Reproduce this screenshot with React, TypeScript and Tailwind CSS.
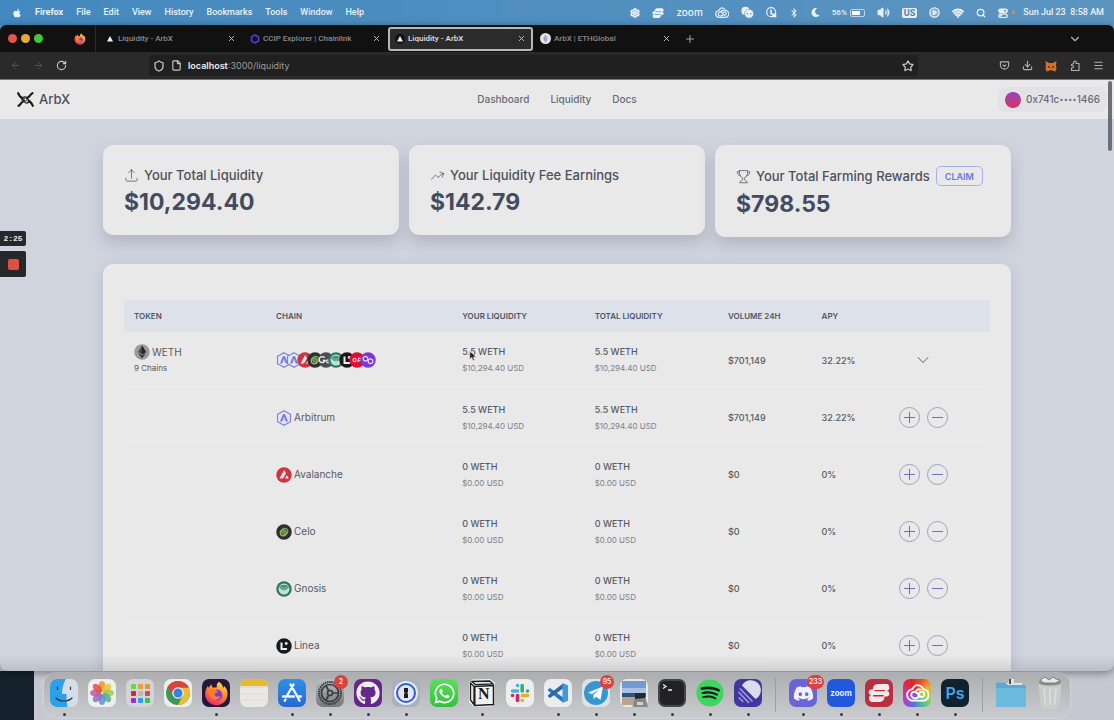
import React from "react";
import {
  FaApple,
  FaBluetoothB,
  FaDiscord,
  FaGithub,
  FaMoon,
  FaSpotify,
  FaWhatsapp,
} from "react-icons/fa";
import {
  ArrowLeft,
  ArrowRight,
  ChevronDown,
  CirclePlay,
  Download,
  File,
  Menu,
  Plus,
  RotateCw,
  Search,
  Settings,
  Shield,
  Star,
  Volume2,
  Wifi,
  X,
} from "lucide-react";

type ChainName =
  | "Arbitrum"
  | "Avalanche"
  | "Celo"
  | "Goerli"
  | "Gnosis"
  | "Linea"
  | "Optimism"
  | "Polygon";

interface ChainRow {
  name: ChainName;
  amount: string;
  usd: string;
  volume: string;
  apy: string;
}

const chainRows: ChainRow[] = [
  { name: "Arbitrum", amount: "5.5 WETH", usd: "$10,294.40 USD", volume: "$701,149", apy: "32.22%" },
  { name: "Avalanche", amount: "0 WETH", usd: "$0.00 USD", volume: "$0", apy: "0%" },
  { name: "Celo", amount: "0 WETH", usd: "$0.00 USD", volume: "$0", apy: "0%" },
  { name: "Gnosis", amount: "0 WETH", usd: "$0.00 USD", volume: "$0", apy: "0%" },
  { name: "Linea", amount: "0 WETH", usd: "$0.00 USD", volume: "$0", apy: "0%" },
];

const stack: ChainName[] = [
  "Arbitrum",
  "Arbitrum",
  "Avalanche",
  "Celo",
  "Goerli",
  "Gnosis",
  "Linea",
  "Optimism",
  "Polygon",
];

const ChainIcon = ({ name }: { name: ChainName }) => {
  return (
    <svg viewBox="0 0 32 32" className="size-4 shrink-0">
      {name === "Arbitrum" && (
        <>
          <path d="M16 1.5 29 8.7v14.6L16 30.5 3 23.3V8.7z" fill="#e4e4f2" stroke="#7f7fd6" strokeWidth="2.2" />
          <path d="M8 23 14 8.5h4L24 23h-4.200L16 13l-3.800 10z" fill="#7676d2" />
          <path d="m15 20 2.500-5 2 5.500z" fill="#a7a7ea" />
        </>
      )}
      {name === "Avalanche" && (
        <>
          <circle cx="16" cy="16" r="15.500" fill="#cf3442" />
          <path d="M7 23 15.500 7.500c.6-1 1.400-1 2 0l2 3.800c.4.800.4 1.400 0 2.200L14.500 22c-.5.800-1 1-1.800 1zM18 23l3-5.300c.5-.8 1.200-.8 1.700 0l3 5.300z" fill="#f3e5e7" />
        </>
      )}
      {name === "Celo" && (
        <>
          <circle cx="16" cy="16" r="15.500" fill="#2c3130" />
          <circle cx="17.500" cy="14.500" r="6" fill="none" stroke="#6aa574" strokeWidth="2.500" />
          <circle cx="14.500" cy="17.500" r="6" fill="none" stroke="#a5b35c" strokeWidth="2.500" />
          <circle cx="16" cy="16" r="3.500" fill="#6e8b4a" />
        </>
      )}
      {name === "Goerli" && (
        <>
          <circle cx="16" cy="16" r="15.500" fill="#4c4e50" />
          <path d="M13 11.500A6 6 0 1 0 14 17H9.500" fill="none" stroke="#eee" strokeWidth="2.800" />
          <circle cx="20" cy="18.500" r="3" fill="none" stroke="#eee" strokeWidth="2.500" />
        </>
      )}
      {name === "Gnosis" && (
        <>
          <circle cx="16" cy="16" r="15.500" fill="#2b7a60" />
          <circle cx="16" cy="16" r="11" fill="#c9ded5" />
          <path d="M6 12c3-6 17-6 20 0l-5 5c-2 2-8 2-10 0z" fill="#46917a" />
          <path d="m9 11 7 6 7-6" fill="none" stroke="#b9d6cb" strokeWidth="1.500" />
        </>
      )}
      {name === "Linea" && (
        <>
          <circle cx="16" cy="16" r="15.500" fill="#18191b" />
          <path d="M9 9h4v11h9v4H9z" fill="#eee" />
          <circle cx="20.500" cy="11" r="2.800" fill="#eee" />
        </>
      )}
      {name === "Optimism" && (
        <>
          <circle cx="16" cy="16" r="15.500" fill="#e30c2c" />
          <ellipse cx="11" cy="16" rx="3" ry="3.500" fill="none" stroke="#f8dce0" strokeWidth="2.200" />
          <path d="m17.500 20.500 1.500-8h3.500c3.500 0 2.500 5-.5 5h-3.300" fill="none" stroke="#f8dce0" strokeWidth="2.200" />
        </>
      )}
      {name === "Polygon" && (
        <>
          <circle cx="16" cy="16" r="15.500" fill="#7c35d8" />
          <path
            d="m11 8.500 4.500 2.600v5L11 18.700l-4.500-2.600v-5zM21 13.300l4.500 2.600v5L21 23.500l-4.500-2.600v-5zM15.500 15.500l2 1.500"
            fill="none"
            stroke="#efe4fb"
            strokeWidth="2.300"
            strokeLinejoin="round"
          />
        </>
      )}
    </svg>
  );
};

const EthIcon = () => (
  <svg viewBox="0 0 32 32" className="size-4 shrink-0">
    <circle cx="16" cy="16" r="15.500" fill="#9b9b9c" />
    <path d="m16 3 8 13.200-8 4.700-8-4.700z" fill="#4a4a4c" />
    <path d="m16 3 8 13.200-8 4.700z" fill="#222326" />
    <path d="m8 18 8 4.700 8-4.700L16 29z" fill="#36373a" />
  </svg>
);

const FirefoxLogo = ({ className }: { className?: string }) => (
  <svg viewBox="0 0 32 32" className={className}>
    <defs>
      <linearGradient id="fox" x1="0.800" y1="0" x2="0.300" y2="1">
        <stop offset="0" stopColor="#ffe14a" />
        <stop offset="0.450" stopColor="#ff8a2a" />
        <stop offset="1" stopColor="#f0246e" />
      </linearGradient>
    </defs>
    <path
      d="M19 1c4 2.500 5 5 5.500 8 1-.8 1.200-1.800 1-3 3.500 3.500 5 7 4.500 12-.8 8-7 13-14 13S2 25.500 1.500 18C1.200 13 3 9 5 6l1 3c1-2 2-3.500 4-5-.2 2 .3 3.500 1.500 4.500 2.500-.2 3.500 0 5-.5C15.500 5.500 17 2.500 19 1z"
      fill="url(#fox)"
    />
    <circle cx="16.500" cy="18" r="7" fill="#7a3fd0" />
    <path d="M6 11c3-2 7-1.500 9 1 2 .3 3 .5 3 1.500-1 1.500-3.500 1.500-4.500 3.500.5 3 4 4.500 8 2-1 5-8 7-12.500 3.500C6.500 20 5 16 6 11z" fill="#ff7a2d" />
  </svg>
);

const CreativeCloud = ({ className }: { className?: string }) => (
  <svg viewBox="0 0 32 32" className={className} fill="none" stroke="currentColor" strokeWidth="2.600" strokeLinecap="round">
    <path d="M10 26a8 8 0 0 1-1-16C11 5 15 3.500 19 5c2.500.8 4 2.500 5 5a8 8 0 0 1-1 16z" />
    <path d="M18 20.500c-3 2.500-7 3-9.500.5a4.500 4.500 0 0 1 1-7c3-1.500 5 0 7 2.500l2.500 3c1.500 1.500 3.500 2 5.500.5a4 4 0 0 0-1.500-6.500c-2-.5-3 .2-4 1.500M14 12c2-2 4-2.500 6-1.500" />
  </svg>
);

const Loop = ({ className, slit }: { className?: string; slit: string }) => (
  <svg viewBox="0 0 32 32" className={className}>
    <path
      d="M14 3h12a5 5 0 0 1 0 10h1a4 4 0 0 1 0 8h-3a8 8 0 0 1-7 8H7a5 5 0 0 1-1-10H5a4 4 0 0 1 0-8h2a8 8 0 0 1 7-8z"
      fill="currentColor"
    />
    <path d="M10 12.500h14M8 20h14" stroke={slit} strokeWidth="2" strokeLinecap="round" />
  </svg>
);

const ArbxLogo = () => (
  <svg viewBox="0 0 48 42" className="h-[15px] w-[17px]" fill="none" stroke="#1b1b1d">
    <path d="M2 1l5 9c3 5 6 8 11 8M46 2c-5 2-8 5-10 9-2 3-5 5-9 5M46 41l-5-9c-3-5-6-8-11-8M2 40c5-2 8-5 10-9 2-3 5-5 9-5" strokeWidth="6" />
    <path d="M12 12c4 2 5 14 12 18 4 2 8 0 10-3M14 24c-1-7 5-12 11-10 6 2 7 10 13 17" strokeWidth="3.500" />
    <circle cx="24" cy="21" r="4" strokeWidth="2.500" />
  </svg>
);

const MenuBar = () => {
  const items = ["File", "Edit", "View", "History", "Bookmarks", "Tools", "Window", "Help"];
  return (
    <div className="flex h-[25px] shrink-0 items-center justify-between bg-linear-to-r from-[#4389bf] to-[#5c94c0] pr-[10px] pl-3 font-[Roboto,sans-serif] text-[9px] font-medium text-[#eaf2f8]">
      <div className="flex items-center gap-[13px]">
        <FaApple className="size-[10px]" />
        <span className="font-bold">Firefox</span>
        {items.map((item) => (
          <span key={item}>{item}</span>
        ))}
      </div>
      <div className="flex items-center gap-3">
        <Settings className="size-[10px]" strokeWidth={4} />
        <Loop className="size-[12px]" slit="#5791c0" />
        <span className="font-[Inter,sans-serif] text-[10px]">zoom</span>
        <CreativeCloud className="size-[14px]" />
        <svg viewBox="0 0 32 32" className="size-[13px]" fill="currentColor">
          <circle cx="11" cy="12" r="10" />
          <circle cx="20" cy="19" r="11" stroke="#5791c0" strokeWidth="1.500" />
          <circle cx="16" cy="19" r="2" fill="#5791c0" />
          <circle cx="24" cy="19" r="2" fill="#5791c0" />
        </svg>
        <svg viewBox="0 0 32 32" className="size-[11px]" fill="none" stroke="currentColor" strokeWidth="3.500">
          <circle cx="15" cy="15" r="13" />
          <path d="M15 8v14" strokeWidth="5" />
          <path d="M18 19h12v11H18z" fill="currentColor" stroke="none" />
        </svg>
        <FaBluetoothB className="size-[10px]" />
        <FaMoon className="size-[9px]" />
        <span className="flex items-center gap-[3px] text-[8px]">
          56%
          <span className="flex h-[8px] w-[15px] rounded-[2px] border border-white/60 p-px">
            <span className="w-2 bg-white" />
          </span>
        </span>
        <Volume2 className="size-[13px] fill-current" />
        <span className="rounded-[2px] bg-[#e8f0f6] px-[2px] text-[9px] leading-[10px] font-bold text-[#4f83a9]">US</span>
        <CirclePlay className="size-[11px] fill-white/20" strokeWidth={3} />
        <Wifi className="size-[12px]" strokeWidth={4} />
        <Search className="size-[10px]" strokeWidth={3} />
        <span className="flex items-center gap-1">
          <svg viewBox="0 0 20 20" className="size-[10px]" fill="none" stroke="currentColor" strokeWidth="2.500">
            <rect x="1.500" y="2" width="17" height="7" rx="3.500" fill="currentColor" />
            <rect x="1.500" y="12" width="17" height="7" rx="3.500" />
            <circle cx="14" cy="5.500" r="2" fill="#5791c0" stroke="none" />
            <circle cx="6" cy="15.500" r="2" fill="currentColor" stroke="none" />
          </svg>
          <span className="size-[3px] rounded-full bg-[#d99545]" />
        </span>
        <span className="-ml-1">Sun Jul 23&nbsp; 8:58 AM</span>
      </div>
    </div>
  );
};

const Triangle = () => (
  <svg viewBox="0 0 10 10" className="size-[10px]">
    <circle cx="5" cy="5" r="5" fill="#111" />
    <path d="M5 2 8 7.500H2z" fill="#f2f2f2" />
  </svg>
);

const Tab = ({ icon, title, active }: { icon: React.ReactNode; title: string; active?: boolean }) => (
  <div
    className={
      active
        ? "flex h-[24px] w-[145px] items-center rounded-[3px] border-2 border-[#b9b9b9] bg-[#2b2b2b] px-[5px] font-semibold text-[#d8d8d8]"
        : "flex h-[24px] w-[145px] items-center px-[7px] font-medium text-[#8a8a8a]"
    }
  >
    {icon}
    <span className="ml-[3px] flex-1 whitespace-nowrap">{title}</span>
    <button aria-label={"Close " + title}>
      <X className="size-[9px] text-[#c4c4c4]" strokeWidth={2.5} />
    </button>
  </div>
);

const TabBar = () => (
  <div className="flex h-[27px] shrink-0 items-center rounded-t-md bg-[#111111] font-[Roboto,sans-serif] text-[8px]">
    <div className="flex h-full w-[96px] shrink-0 items-center gap-[4px] border-r border-[#2c2c2c] pl-[8px]">
      <span className="size-[9px] rounded-full bg-[#e2554f]" />
      <span className="size-[9px] rounded-full bg-[#e3ab35]" />
      <span className="size-[9px] rounded-full bg-[#45c53c]" />
      <FirefoxLogo className="mr-[9px] ml-auto size-[12px]" />
    </div>
    <div className="flex pl-[2px]">
      <Tab icon={<Triangle />} title="Liquidity - ArbX" />
      <Tab
        icon={
          <svg viewBox="0 0 10 10" className="size-[10px]">
            <path d="M5 1 8.500 3v4L5 9 1.500 7V3z" fill="none" stroke="#4b3bd0" strokeWidth="1.700" />
          </svg>
        }
        title="CCIP Explorer | Chainlink"
      />
      <Tab icon={<Triangle />} title="Liquidity - ArbX" active />
      <Tab
        icon={
          <svg viewBox="0 0 12 12" className="size-[11px]">
            <circle cx="6" cy="6" r="6" fill="#e6e3ea" />
            <path d="m6 1.500 2.500 4.500L6 10.500 3.500 6z" fill="#8f9fd8" />
            <path d="m6 1.500 2.500 4.500L6 7.500z" fill="#e8b07e" />
          </svg>
        }
        title="ArbX | ETHGlobal"
      />
    </div>
    <button aria-label="New tab" className="ml-[6px]">
      <Plus className="size-[12px] text-[#a5a5a5]" />
    </button>
    <button aria-label="List all tabs" className="mr-[32px] ml-auto">
      <ChevronDown className="size-[14px] text-[#b5b5b5]" />
    </button>
  </div>
);

const Toolbar = () => (
  <div className="flex h-[28px] shrink-0 items-center border-b border-[#777] bg-[#2a2a2a] text-[#c6c6c6]">
    <div className="flex w-[149px] shrink-0 items-center gap-3 pl-[10px]">
      <ArrowLeft className="size-[11px] text-[#565656]" />
      <ArrowRight className="size-[11px] text-[#565656]" />
      <RotateCw className="size-[11px]" strokeWidth={2.5} />
    </div>
    <div className="flex h-[21px] flex-1 items-center rounded-[3px] bg-[#202020] px-[4px]">
      <Shield className="size-[12px]" strokeWidth={2.5} />
      <File className="ml-[6px] size-[11px]" strokeWidth={2.5} />
      <p className="ml-[6px] flex-1 text-[9px] text-[#9a9a9a]">
        <span className="font-semibold text-[#ededed]">localhost</span>:3000/liquidity
      </p>
      <Star className="size-[12px]" strokeWidth={2.5} />
    </div>
    <div className="flex w-[196px] shrink-0 items-center justify-end gap-[12px] pr-[10px] text-[#b0b0b0]">
      <svg viewBox="0 0 24 24" className="size-[11px]" fill="none" stroke="currentColor" strokeWidth="2.500">
        <path d="M3 4h18v7a9 9 0 0 1-18 0z" strokeLinejoin="round" />
        <path d="m8 10 4 4 4-4" />
      </svg>
      <Download className="size-[11px]" strokeWidth={2.5} />
      <svg viewBox="0 0 24 24" className="size-[12px]">
        <path d="m1 2 7 4h8l7-4-1 9 1 6-2 6-6-1.500H9L3 23l-2-6 1-6z" fill="#d4702b" />
        <path d="m6 12 4 1v3l-4-1zM18 12l-4 1v3l4-1zM9 20h6v2H9z" fill="#5b2f16" />
      </svg>
      <svg viewBox="0 0 24 24" className="size-[12px]" fill="none" stroke="currentColor" strokeWidth="2.200" strokeLinejoin="round">
        <path d="M9.500 6V4.500a2.500 2.500 0 0 1 5 0V7H20v14H5v-5h1.500a2.500 2.500 0 0 0 0-5H5V9l4.500-2z" />
      </svg>
      <Menu className="size-[11px]" strokeWidth={2.5} />
    </div>
  </div>
);

const SiteHeader = () => (
  <header className="grid h-[39px] shrink-0 grid-cols-[1fr_auto_1fr] items-center bg-[#e9e9ea] text-[10px] font-medium text-[#686c75]">
    <a href="#" className="flex items-center gap-[5px] pl-[17px] text-[13px] text-[#4b505b]">
      <ArbxLogo />
      ArbX
    </a>
    <nav className="flex gap-[21px]">
      <a href="#">Dashboard</a>
      <a href="#">Liquidity</a>
      <a href="#">Docs</a>
    </nav>
    <button className="mr-[7px] flex h-[25px] items-center gap-[5px] justify-self-end rounded-lg bg-[#e3e3e6] px-[7px]">
      <span className="size-4 rounded-full bg-linear-to-b from-[#9440b8] to-[#d92b62]" />
      <span className="flex items-center">
        0x741c
        <span className="text-[13px] leading-none font-bold">····</span>
        1466
      </span>
    </button>
  </header>
);

const StatCard = ({
  icon,
  title,
  value,
  action,
}: {
  icon: string;
  title: string;
  value: string;
  action?: string;
}) => (
  <section className="rounded-[10px] bg-[#e9e9ea] px-[21px] pt-5 pb-[18px] shadow-[0_8px_16px_rgba(70,75,95,0.22)]">
    <div className="flex items-center text-[13px] leading-5 font-medium whitespace-nowrap text-[#4d515b]">
      <svg
        viewBox="0 0 24 24"
        className="mr-[5px] size-[15px]"
        fill="none"
        stroke="currentColor"
        strokeWidth="1.200"
        strokeLinecap="round"
        strokeLinejoin="round"
      >
        <path d={icon} />
      </svg>
      {title}
      {action && (
        <button className="my-px ml-[6px] h-5 rounded-[5px] border border-[#a5b0ee] px-[8px] text-[9px] leading-none font-semibold text-[#5f78ee]">
          {action}
        </button>
      )}
    </div>
    <p className="mt-[2px] text-[23px] leading-[30px] font-bold text-[#434b5f]">{value}</p>
  </section>
);

const uploadPath =
  "M3 16.500v2.250A2.250 2.250 0 005.250 21h13.500A2.250 2.250 0 0021 18.750V16.500m-13.500-9L12 3m0 0l4.500 4.500M12 3v13.500";
const trendPath =
  "M2.250 18L9 11.250l4.306 4.307a11.950 11.950 0 015.814-5.519l2.740-1.220m0 0l-5.940-2.280m5.940 2.280l-2.280 5.941";
const trophyPath =
  "M5.500 2.500h13v3c0 4-1.500 7-5 8.500v3c0 1.500 3.500 2 4.500 3.500v1.500H6v-1.500c1-1.500 4.500-2 4.500-3.500v-3c-3.500-1.500-5-4.500-5-8.500zM5.500 4.500H2c0 3.500 2 6 5 6.500M18.500 4.500H22c0 3.500-2 6-5 6.500";

const Amount = ({ amount, usd }: { amount: string; usd: string }) => (
  <>
    <p className="leading-4 font-medium">{amount}</p>
    <p className="text-[8px] leading-4 text-[#7d8087]">{usd}</p>
  </>
);

const RoundButton = ({ label, path }: { label: string; path: string }) => (
  <button
    aria-label={label}
    className="flex size-[21px] items-center justify-center rounded-full border border-[#a19ec2] text-[#736fb4]"
  >
    <svg viewBox="0 0 13 13" className="size-[13px]" stroke="currentColor" strokeWidth="1">
      <path d={path} />
    </svg>
  </button>
);

const LiquidityTable = () => (
  <table className="w-full table-fixed text-left text-[9px] text-[#565a63]">
    <colgroup>
      <col className="w-[16.4%]" />
      <col className="w-[21.5%]" />
      <col className="w-[15.3%]" />
      <col className="w-[15.4%]" />
      <col className="w-[10.8%]" />
      <col className="w-[8.9%]" />
      <col />
    </colgroup>
    <thead>
      <tr className="h-8 bg-[#dde1ea] text-[8px] text-[#4f5563]">
        <th className="rounded-l px-[10px] font-semibold">TOKEN</th>
        <th className="px-[10px] font-semibold">CHAIN</th>
        <th className="px-[10px] font-semibold">YOUR LIQUIDITY</th>
        <th className="px-[10px] font-semibold">TOTAL LIQUIDITY</th>
        <th className="px-[10px] font-semibold">VOLUME 24H</th>
        <th className="px-[10px] font-semibold">APY</th>
        <th />
      </tr>
    </thead>
    <tbody>
      <tr className="h-[57px] border-b border-[#e7e7e8]">
        <td className="px-[10px]">
          <p className="flex h-4 items-center gap-[2px] text-[10px]">
            <EthIcon />
            WETH
          </p>
          <p className="text-[8px] leading-4">9 Chains</p>
        </td>
        <td className="px-[10px]">
          <div className="flex w-[94px]">
            {stack.map((name, i) => (
              <span key={i} className="flex w-0 flex-1">
                <ChainIcon name={name} />
              </span>
            ))}
          </div>
        </td>
        <td className="px-[10px]">
          <Amount amount="5.5 WETH" usd="$10,294.40 USD" />
        </td>
        <td className="px-[10px]">
          <Amount amount="5.5 WETH" usd="$10,294.40 USD" />
        </td>
        <td className="px-[10px] font-medium">$701,149</td>
        <td className="px-[10px] font-medium">32.22%</td>
        <td className="px-[10px]">
          <button aria-label="Collapse chains" className="flex w-[49px] justify-center">
            <ChevronDown className="size-[20px] text-[#777a82]" strokeWidth={1.25} />
          </button>
        </td>
      </tr>
      {chainRows.map((row) => (
        <tr key={row.name} className="h-[57px] border-b border-[#e7e7e8]">
          <td />
          <td className="px-[10px]">
            <p className="flex items-center gap-[2px] text-[10px]">
              <ChainIcon name={row.name} />
              {row.name}
            </p>
          </td>
          <td className="px-[10px]">
            <Amount amount={row.amount} usd={row.usd} />
          </td>
          <td className="px-[10px]">
            <Amount amount={row.amount} usd={row.usd} />
          </td>
          <td className="px-[10px] font-medium">{row.volume}</td>
          <td className="px-[10px] font-medium">{row.apy}</td>
          <td className="px-[10px]">
            <div className="flex gap-[7px]">
              <RoundButton label={"Add " + row.name + " liquidity"} path="M6.500 1v11M1 6.500h11" />
              <RoundButton label={"Remove " + row.name + " liquidity"} path="M1 6.500h11" />
            </div>
          </td>
        </tr>
      ))}
    </tbody>
  </table>
);

const DockItem = ({
  className,
  children,
  open,
  badge,
}: {
  className?: string;
  children?: React.ReactNode;
  open?: boolean;
  badge?: string;
}) => (
  <div className="relative flex h-full w-7 shrink-0 flex-col items-center pt-[6px]">
    <div className={"flex size-7 items-center justify-center rounded-[7px] " + (className || "")}>{children}</div>
    {open && <span className="mt-[6px] size-[3px] rounded-full bg-[#3a3a3c]" />}
    {badge && (
      <span className="absolute top-[2px] left-[18px] min-w-[14px] rounded-full bg-[#da4242] px-[2px] text-center text-[7px] leading-[14px] font-medium text-white">
        {badge}
      </span>
    )}
  </div>
);

const DockDivider = () => <span className="mx-[3px] mt-[5px] h-[34px] w-px shrink-0 bg-[#9c9da0]" />;

const Dock = () => {
  const petals = ["#f0902c", "#e9c62f", "#a2c84a", "#53b08a", "#5a95d6", "#8c6fc5", "#c35a9b", "#e2513f"];
  const tiles = ["#5be03a", "#e8a13a", "#e8932b", "#d52b2b", "#b9b9bd", "#e83a66", "#a02ad0", "#2f9ae8", "#38c04a"];
  return (
    <div className="relative z-10 mx-auto flex h-[45px] w-fit gap-[10px] rounded-[12px] bg-linear-to-b from-[#adaeb0] to-[#cbcccf] px-[6px] shadow-[0_0_0_1px_rgba(255,255,255,0.2)]">
      {/* Finder */}
      <DockItem open className="overflow-hidden">
        <svg viewBox="0 0 28 28">
          <path d="M0 0h28v28H0z" fill="#d5dde6" />
          <path d="M0 0h16c-2.500 4-4 9-4 15h4.500c0 5 .2 9 .8 13H0z" fill="#2ea0ea" />
          <path d="M7.500 8v2.500M20.500 8v2.500M6 19c4 4 12 4 16 0" fill="none" stroke="#263746" strokeWidth="1.200" strokeLinecap="round" />
        </svg>
      </DockItem>
      {/* Photos */}
      <DockItem className="bg-[#eeeeee]">
        <svg viewBox="0 0 28 28">
          {petals.map((color, i) => (
            <ellipse key={color} cx="14" cy="7.500" rx="3.500" ry="5.500" fill={color} fillOpacity="0.850" transform={`rotate(${i * 45} 14 14)`} />
          ))}
        </svg>
      </DockItem>
      {/* Launchpad */}
      <DockItem className="bg-[#d3d4d8]">
        <div className="grid grid-cols-3 gap-[2px]">
          {tiles.map((color) => (
            <span key={color} className="size-[5px] rounded-[1px]" style={{ backgroundColor: color }} />
          ))}
        </div>
      </DockItem>
      {/* Chrome */}
      <DockItem className="bg-[#eeeeee]">
        <svg viewBox="0 0 28 28">
          <circle cx="14" cy="14" r="12" fill="#3a9a54" />
          <path d="M14 8.500h10.700A12 12 0 0 1 14 26l4.800-9.300z" fill="#eebc34" />
          <path d="M3.600 8A12 12 0 0 1 24.700 8.500H14l-5 8z" fill="#d9443a" />
          <circle cx="14" cy="14" r="5.800" fill="#f1f1f1" />
          <circle cx="14" cy="14" r="4.500" fill="#3b7de0" />
        </svg>
      </DockItem>
      <DockItem open className="bg-[#23183c]">
        <FirefoxLogo className="size-[25px]" />
      </DockItem>
      {/* Notes */}
      <DockItem className="overflow-hidden bg-[#e9e8e4]">
        <svg viewBox="0 0 28 28">
          <path d="M0 0h28v7H0z" fill="#e8b92a" />
          <path d="M0 8h28" stroke="#cfcdc6" strokeWidth="0.700" />
          <path d="M0 15h28M0 21h28" stroke="#dbd9d3" strokeWidth="0.700" />
        </svg>
      </DockItem>
      {/* App Store */}
      <DockItem open className="bg-linear-to-b from-[#2f90ea] to-[#2868cf]">
        <svg viewBox="0 0 28 28" fill="none" stroke="#eef4fb" strokeWidth="2.400" strokeLinecap="round">
          <path d="m12.500 5.500 8 14M15.500 5.500l-7 12M5 17.500h11M20 17.500h3M7.500 20.500l-.7 1.200M20.500 20l1 1.700" />
        </svg>
      </DockItem>
      {/* System settings */}
      <DockItem open badge="2" className="bg-linear-to-b from-[#b9bfbe] to-[#777879]">
        <svg viewBox="0 0 28 28" fill="none" stroke="#37393b">
          <circle cx="14" cy="14" r="11" strokeWidth="2" strokeDasharray="1.500 0.700" />
          <circle cx="14" cy="14" r="8.500" strokeWidth="1.700" />
          <circle cx="14" cy="14" r="2.500" strokeWidth="1.500" />
          <path d="M16.500 14H22M12.800 11.800 10 7M12.800 16.200 10 21" strokeWidth="1.700" />
        </svg>
      </DockItem>
      <DockItem open className="bg-[#64288a]">
        <FaGithub className="size-6 text-[#f0edf3]" />
      </DockItem>
      {/* 1Password */}
      <DockItem open className="bg-[#a9b0c2]">
        <svg viewBox="0 0 28 28">
          <circle cx="14" cy="14" r="12" fill="#e9ebef" />
          <circle cx="14" cy="14" r="9" fill="#e4e7ee" stroke="#2a60d0" strokeWidth="2" />
          <path d="M12 9h4v4l-1 1 1 1v4h-4v-4l1-1-1-1z" fill="#1c1e26" />
        </svg>
      </DockItem>
      <DockItem className="bg-linear-to-b from-[#5ade5b] to-[#2fc33a]">
        <FaWhatsapp className="size-[23px] text-white" />
      </DockItem>
      {/* Notion */}
      <DockItem open>
        <svg viewBox="0 0 28 28">
          <path d="m1 3 3-2.500 18-.5 5 4v21l-3 2.500-18 .5-5-5z" fill="#efefee" />
          <path d="m2.500 4 3.500 3.500v18L2.500 21zM4 2.500 21.500 2 25 5 7.500 5.700z" fill="#e9e9e9" stroke="#1b1b1b" strokeWidth="1.300" />
          <path d="M6.800 7.500 25.500 6.500v19L6.800 26.500z" fill="#f1f1f0" stroke="#1b1b1b" strokeWidth="1.500" />
        </svg>
        <span className="absolute top-[11px] left-[10px] font-['Liberation_Serif',serif] text-[16px] leading-[20px] font-bold text-[#1b1b1b]">
          N
        </span>
      </DockItem>
      {/* Slack */}
      <DockItem className="bg-[#eeeeee]">
        <svg viewBox="0 0 28 28" strokeWidth="3.600" strokeLinecap="round">
          <path d="M6.500 12h5M11.500 6.500h.1" stroke="#45b5e0" />
          <path d="M16.200 6.500V12M21.500 12h.1" stroke="#3bab78" />
          <path d="M16.500 16.500h5M16.200 21.500h.1" stroke="#dfae35" />
          <path d="M11.500 16.500v5M6.500 16.500h.1" stroke="#cf2758" />
        </svg>
      </DockItem>
      {/* VS Code */}
      <DockItem open className="bg-[#ececee]">
        <svg viewBox="0 0 28 28">
          <path d="m4 10.500 2-1.500L19 18.500v5L4 11.800z" fill="#2b77bb" />
          <path d="m4 17.500 2 1.500L19 9.500v-5L4 16.200z" fill="#2868a8" />
          <path d="m18.500 4 5.500 2.300v15.400l-5.500 2.300z" fill="#3f9add" />
        </svg>
      </DockItem>
      {/* Telegram */}
      <DockItem open badge="95" className="bg-[#dfe2e4]">
        <svg viewBox="0 0 28 28">
          <circle cx="14" cy="14" r="12" fill="#3597cf" />
          <path d="m6 13.500 15-6-2.500 13.500-4.500-3.300-2.300 2.500-.4-4.200 6-5.500-7.500 4.700z" fill="#f5f7f9" />
        </svg>
      </DockItem>
      {/* Preview */}
      <DockItem open className="bg-[#e8e8e8]">
        <svg viewBox="0 0 28 28" className="overflow-visible">
          <path d="M2 2h24v24H2z" fill="#7199d2" />
          <path d="M2 9h24v5H2z" fill="#a9c0e2" />
          <path d="M2 14h24v4H2z" fill="#31527e" />
          <path d="M2 18h24v8H2z" fill="#b8a48d" />
          <path d="M15 14h10v8H15z" fill="#26282c" />
          <path d="m14.500 20 11-1 2.500 9H12.500z" fill="#85888c" />
          <path d="M17 23h6v3h-6z" fill="#cfd1d3" />
        </svg>
      </DockItem>
      {/* Terminal */}
      <DockItem open className="border-2 border-[#434446] bg-[#222224]">
        <svg viewBox="0 0 24 24" className="size-6" fill="none" stroke="#eee" strokeWidth="1.300">
          <path d="m3 3.500 3 2-3 2M8 9h4" />
        </svg>
      </DockItem>
      <DockItem open>
        <span className="flex size-[26px] items-center justify-center rounded-full bg-[#191c1a]">
          <FaSpotify className="size-7 shrink-0 text-[#3fd660]" />
        </span>
      </DockItem>
      {/* Linear */}
      <DockItem open className="bg-[#4036a0]">
        <svg viewBox="0 0 28 28">
          <path d="M8 6.500A10 10 0 1 1 21.500 20z" fill="#dcdcf0" />
          <path d="m5.800 9.500 12.700 13M4.500 13l10.500 11M4.800 18.500l4.500 4.500" stroke="#a5a1dc" strokeWidth="1.500" />
        </svg>
      </DockItem>
      <DockDivider />
      <DockItem open badge="233" className="bg-[#6965d6]">
        <FaDiscord className="size-[21px] text-[#f1f1fa]" />
      </DockItem>
      <DockItem open className="bg-[#2258dc] text-[8px] font-bold text-[#e9effb]">zoom</DockItem>
      <DockItem open className="bg-[#b92f40] text-[#f4e9ea]">
        <Loop className="size-[22px]" slit="#b92f40" />
      </DockItem>
      <DockItem
        open
        className="bg-[conic-gradient(from_20deg,#e8502c,#e8b03a,#9ad84c,#55b8a0,#5a6be0,#b83ad0,#e02a6d,#e02424,#e8502c)] text-white"
      >
        <CreativeCloud className="size-[23px]" />
      </DockItem>
      <DockItem open className="bg-[#10222f] text-[16px] font-semibold text-[#45a6e6]">Ps</DockItem>
      <DockDivider />
      <svg viewBox="0 0 30 30" className="mt-[5px] size-[30px]">
        <path d="M4 5h8l1-4h5v4h8v6H4z" fill="#e2e4e6" />
        <path d="M13 1h2v5h-2z" fill="#4a4c50" />
        <path d="M0 6c0-1 .5-1.500 1.500-1.500H9l3 2.500h16c1.200 0 2 .8 2 2v18.500c0 1-.6 1.500-1.500 1.500h-27C.6 29 0 28.500 0 27.500z" fill="#5aa9d0" />
        <path d="M0 10h30v17.500c0 1-.6 1.500-1.500 1.500h-27C.6 29 0 28.500 0 27.500z" fill="#6cbbdf" />
      </svg>
      <svg viewBox="0 0 28 34" className="mt-[3px] h-[34px] w-7">
        <path d="M2 4h24l-3 28c-2 1.500-16 1.500-18 0z" fill="#cacbcb" />
        <path d="M2 4c6 3 18 3 24 0l-1.500 4C19 10 9 10 3.500 8z" fill="#8b8c8d" />
        <path d="m4 4 5-3 4 3 4-3 3 2 4 1-4 3H8z" fill="#e7e7e7" stroke="#6b6c6e" strokeWidth="0.800" />
        <path d="m8 12 1.500 17M14 12v17M20 12l-1.500 17" stroke="#dedfdf" strokeWidth="1.500" />
      </svg>
    </div>
  );
};

const App = () => {
  return (
    <div className="relative flex h-screen flex-col overflow-hidden bg-[#c5c8d2] font-[Inter,'Liberation_Sans',sans-serif]">
      <MenuBar />
      <div className="relative z-10 flex min-h-0 flex-1 flex-col overflow-hidden rounded-b-lg bg-[#d0d4df] shadow-[0_2px_8px_rgba(0,0,0,0.4)]">
        <div className="flex shrink-0 flex-col bg-[#4f8fc0]">
          <TabBar />
          <Toolbar />
        </div>
        <SiteHeader />
        <main className="mx-auto flex min-h-0 w-full max-w-[908px] flex-1 flex-col gap-[27px] pt-[26px]">
          <div className="grid grid-cols-3 items-start gap-[10px]">
            <StatCard icon={uploadPath} title="Your Total Liquidity" value="$10,294.40" />
            <StatCard icon={trendPath} title="Your Liquidity Fee Earnings" value="$142.79" />
            <StatCard icon={trophyPath} title="Your Total Farming Rewards" value="$798.55" action="CLAIM" />
          </div>
          <section className="rounded-t-[10px] bg-[#e9e9ea] px-[21px] pt-[36px] pb-5 shadow-[0_4px_14px_rgba(70,75,95,0.18)]">
            <LiquidityTable />
          </section>
        </main>
        <div className="pointer-events-none absolute inset-x-0 bottom-0 h-4 bg-linear-to-b from-transparent to-black/10" />
        <div className="absolute top-[56px] right-[2px] h-[70px] w-[4px] rounded-full bg-[#6d6f74]" />
      </div>
      <div className="relative h-[49px] shrink-0 pt-[2px]">
        <div className="absolute inset-y-0 left-0 w-[34px] bg-[#14212c]" />
        <Dock />
      </div>

      {/* recorder controls */}
      <div className="absolute top-[231px] left-0 z-20 flex w-[26px] flex-col gap-[5px] text-[#e8e8e8]">
        <span className="rounded-r-[2px] bg-[#27282a] text-center font-['Liberation_Mono',monospace] text-[8px] leading-[15px] font-bold">
          2:25
        </span>
        <button aria-label="Stop recording" className="flex h-[26px] items-center justify-center rounded-r-[2px] bg-[#27282a]">
          <span className="size-[11px] rounded-[2px] bg-[#dd5145]" />
        </button>
      </div>

      {/* pointer */}
      <svg viewBox="0 0 10 14" className="absolute top-[350px] left-[469px] z-20 h-[12px] w-[8px]">
        <path d="M1 1v10l2.500-2.200L5 12.500l1.800-.8L5.300 8.200H9z" fill="#222" stroke="#ddd" strokeWidth="0.800" />
      </svg>
    </div>
  );
};

export default App;
